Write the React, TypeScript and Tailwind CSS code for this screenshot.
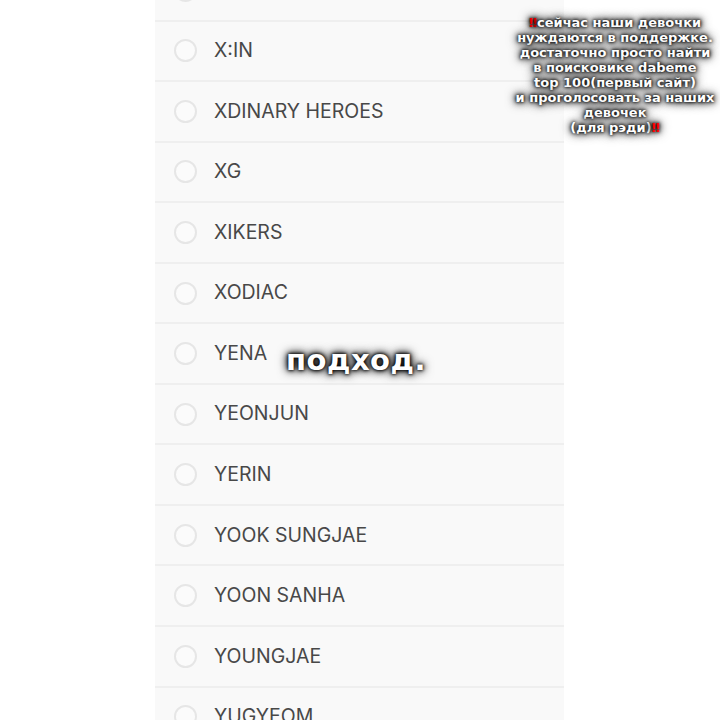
import React from "react";

const items = [
  "",
  "X:IN",
  "XDINARY HEROES",
  "XG",
  "XIKERS",
  "XODIAC",
  "YENA",
  "YEONJUN",
  "YERIN",
  "YOOK SUNGJAE",
  "YOON SANHA",
  "YOUNGJAE",
  "YUGYEOM",
];

const glow =
  "0 0 3px #000, 0 0 5px #000, 0 0 8px rgba(0,0,0,0.9), 0 0 12px rgba(0,0,0,0.7)";

export default function App() {
  return (
    <div className="relative w-[720px] h-[720px] overflow-hidden bg-white">
      <div className="ml-[155px] w-[409px] -mt-[39px] bg-[#f0f0f0] flex flex-col">
        {items.map((name, i) => (
          <div
            key={i}
            className="h-[60.55px] border-b-2 border-[#efefef] bg-[#f9f9f9] flex items-center shrink-0"
          >
            <div className="ml-[19px] w-[23px] h-[23px] rounded-full border-2 border-[#e6e6e6] bg-[#fbfbfb] shrink-0" />
            <span
              className="ml-[17px] text-[19.5px] text-[#484848]"
              style={{ fontFamily: "Inter, 'Noto Sans', sans-serif" }}
            >
              {name}
            </span>
          </div>
        ))}
      </div>

      <div
        className="absolute left-[505px] top-[15px] w-[220px] text-center text-white font-bold text-[13px] leading-[15px]"
        style={{ fontFamily: "'DejaVu Sans', 'Noto Sans', sans-serif", textShadow: glow }}
      >
        <span className="text-[#f00]">‼</span>сейчас наши девочки
        <br />
        нуждаются в поддержке.
        <br />
        достаточно просто найти
        <br />
        в поисковике dabeme
        <br />
        top 100(первый сайт)
        <br />
        и проголосовать за наших
        <br />
        девочек
        <br />
        (для рэди)<span className="text-[#f00]">‼</span>
      </div>

      <div
        className="absolute left-[286px] top-[342px] text-white font-bold text-[29px] leading-[36px] tracking-[0.5px]"
        style={{ fontFamily: "'DejaVu Sans', 'Noto Sans', sans-serif", textShadow: glow }}
      >
        подход.
      </div>
    </div>
  );
}
